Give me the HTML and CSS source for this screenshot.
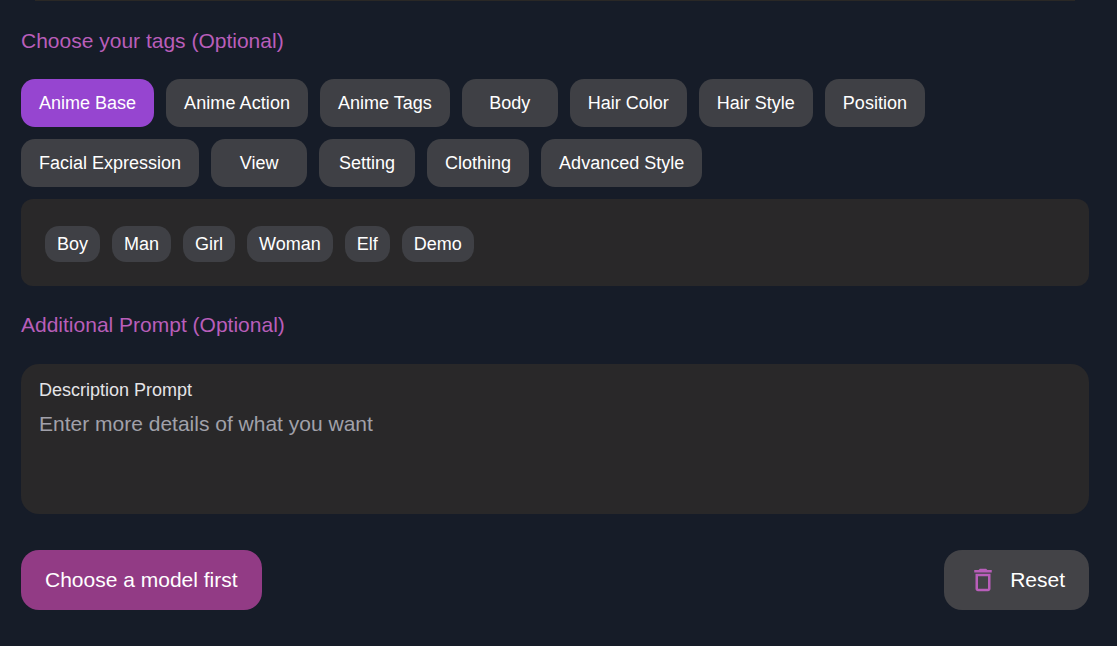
FILE: index.html
```html
<!DOCTYPE html>
<html lang="en">
<head>
<meta charset="utf-8">
<title>Choose your tags</title>
<link rel="stylesheet" href="styles.css">
</head>
<body>
<main class="page">
  <div class="top-rule"></div>
  <h2 class="section-title tags-title">Choose your tags (Optional)</h2>
  <div class="tabs">
    <button class="tab tab-active">Anime Base</button>
    <button class="tab tab-loose">Anime Action</button>
    <button class="tab">Anime Tags</button>
    <button class="tab">Body</button>
    <button class="tab">Hair Color</button>
    <button class="tab">Hair Style</button>
    <button class="tab">Position</button>
    <button class="tab">Facial Expression</button>
    <button class="tab">View</button>
    <button class="tab">Setting</button>
    <button class="tab">Clothing</button>
    <button class="tab">Advanced Style</button>
  </div>
  <div class="chip-panel">
    <button class="chip">Boy</button>
    <button class="chip">Man</button>
    <button class="chip">Girl</button>
    <button class="chip">Woman</button>
    <button class="chip">Elf</button>
    <button class="chip">Demo</button>
  </div>
  <h2 class="section-title prompt-title">Additional Prompt (Optional)</h2>
  <label class="prompt-box">
    <span class="prompt-label">Description Prompt</span>
    <textarea class="prompt-input" placeholder="Enter more details of what you want"></textarea>
  </label>
  <div class="actions">
    <button class="btn-primary">Choose a model first</button>
    <button class="btn-reset">
      <svg class="reset-icon" width="30" height="30" viewBox="0 0 24 24" fill="currentColor" aria-hidden="true">
        <path d="M6 19c0 1.1.9 2 2 2h8c1.1 0 2-.9 2-2V7H6v12zM8 9h8v10H8V9zm7.5-5l-1-1h-5l-1 1H5v2h14V4h-3.5z"/>
      </svg>
      <span>Reset</span>
    </button>
  </div>
</main>
</body>
</html>
```
FILE: styles.css
```css
* {
  box-sizing: border-box;
}

html,
body {
  margin: 0;
  height: 100%;
  overflow: hidden;
  background: #161c28;
}

body {
  font-family: "Liberation Sans", Arial, sans-serif;
  color: #fff;
}

.page {
  padding: 0 28px 0 21px;
}

.top-rule {
  height: 1px;
  margin: 0 14px;
  background: #2a2826;
}

.section-title {
  margin: 0;
  font-size: 21px;
  line-height: 28px;
  font-weight: 400;
  color: #b95eba;
}

.tags-title {
  margin-top: 26px;
}

.tabs {
  display: flex;
  flex-wrap: wrap;
  gap: 12px;
  margin-top: 24px;
}

.tab {
  min-width: 96px;
  height: 48px;
  padding: 0 18px;
  border: 0;
  border-radius: 14px;
  background: #3f4045;
  color: #fff;
  font: 18px/24px "Liberation Sans", Arial, sans-serif;
}

.tab-active {
  background: #9645d0;
}

.tab-loose {
  letter-spacing: 0.08px;
}

.chip-panel {
  display: flex;
  gap: 12px;
  height: 87px;
  margin-top: 12px;
  padding: 27px 24px 24px;
  border-radius: 12px;
  background: #292829;
}

.chip {
  height: 36px;
  padding: 0 12px;
  border: 0;
  border-radius: 14px;
  background: #3f4045;
  color: #fff;
  font: 18px/24px "Liberation Sans", Arial, sans-serif;
}

.prompt-title {
  margin-top: 25px;
}

.prompt-box {
  display: block;
  height: 150px;
  margin-top: 25px;
  padding: 14px 18px;
  border-radius: 18px;
  background: #292829;
}

.prompt-label {
  display: block;
  font-size: 18px;
  line-height: 24px;
  color: #e4e4e7;
}

.prompt-input {
  display: block;
  width: 100%;
  height: 90px;
  margin-top: 8px;
  padding: 0;
  border: 0;
  outline: 0;
  resize: none;
  background: transparent;
  color: #fff;
  font: 21px/28px "Liberation Sans", Arial, sans-serif;
}

.prompt-input::placeholder {
  color: #a1a1aa;
  opacity: 1;
}

.actions {
  display: flex;
  justify-content: space-between;
  margin-top: 36px;
}

.btn-primary,
.btn-reset {
  height: 60px;
  border: 0;
  border-radius: 18px;
  color: #fff;
  font: 21px/28px "Liberation Sans", Arial, sans-serif;
}

.btn-primary {
  padding: 0 24px;
  background: #923b85;
}

.btn-reset {
  display: flex;
  align-items: center;
  gap: 12px;
  padding: 0 24px;
  background: #434347;
}

.reset-icon {
  color: #b95eba;
}
```
